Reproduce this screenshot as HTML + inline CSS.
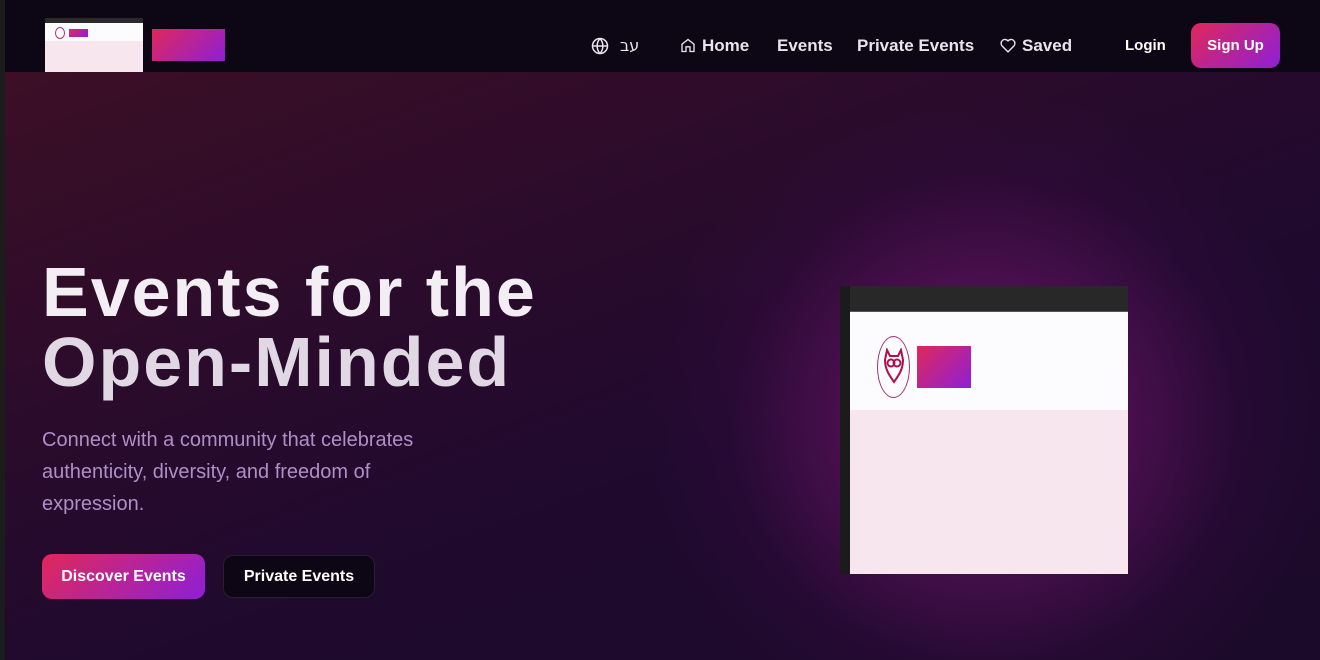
<!DOCTYPE html>
<html><head><meta charset="utf-8"><style>
*{margin:0;padding:0;box-sizing:border-box}
body{width:1320px;height:660px;overflow:hidden;font-family:"Liberation Sans",sans-serif;background:#1e0a2e;position:relative}
.hero{position:absolute;left:0;top:72px;width:1320px;height:588px;
background:radial-gradient(ellipse 340px 330px at 985px 350px,rgba(120,22,110,.95),rgba(95,18,95,.6) 45%,rgba(60,10,70,.25) 75%,rgba(0,0,0,0) 100%),linear-gradient(160deg,#3c0f25 0%,#2a0b2c 35%,#1f0a2e 60%,#1c0a2a 100%)}
.nav{position:absolute;left:0;top:0;width:1320px;height:72px;background:#0d0614}
.lb{position:absolute;left:0;top:0;width:5px;height:660px;background:#1c1c1c}
.t{position:absolute;color:#e8e4ec;font-weight:bold;font-size:17px;white-space:nowrap}
.grad{background:linear-gradient(135deg,#e0285a,#8e1fd6)}
</style></head><body>
<div class="hero"></div>
<div class="nav"></div>
<div class="lb"></div>
<div style="position:absolute;left:45px;top:18px;width:98px;height:54px;background:#f7e6ee">
 <div style="height:5px;background:#2a2a2a"></div>
 <div style="height:18px;background:#fcfcfe;position:relative">
  <div style="position:absolute;left:10px;top:4px;width:10px;height:12px;border:1px solid #b0306a;border-radius:50%"></div>
  <div class="grad" style="position:absolute;left:24px;top:6px;width:19px;height:8px"></div>
 </div>
</div>
<div class="grad" style="position:absolute;left:152px;top:29px;width:73px;height:32px"></div>
<svg style="position:absolute;left:591px;top:37px" width="18" height="18" viewBox="0 0 24 24" fill="none" stroke="#e8e4ec" stroke-width="2"><circle cx="12" cy="12" r="10"/><path d="M2 12h20M12 2a15 15 0 0 1 0 20M12 2a15 15 0 0 0 0 20"/></svg>
<div class="t" style="left:620px;top:36px;font-weight:normal;font-family:'DejaVu Sans',sans-serif;font-size:16px">עב</div>
<svg style="position:absolute;left:680px;top:37px" width="16" height="17" viewBox="0 0 24 24" fill="none" stroke="#e8e4ec" stroke-width="2"><path d="M3 10l9-7 9 7v11h-6v-7H9v7H3z"/></svg>
<div class="t" style="left:702px;top:36px">Home</div>
<div class="t" style="left:777px;top:36px">Events</div>
<div class="t" style="left:857px;top:36px">Private Events</div>
<svg style="position:absolute;left:999px;top:37px" width="18" height="17" viewBox="0 0 24 24" fill="none" stroke="#e8e4ec" stroke-width="2"><path d="M12 21l-8.5-8.5A5 5 0 0 1 12 5.5a5 5 0 0 1 8.5 7z"/></svg>
<div class="t" style="left:1022px;top:36px">Saved</div>
<div class="t" style="left:1125px;top:37px;font-size:15px;color:#fff">Login</div>
<div class="grad" style="position:absolute;left:1191px;top:23px;width:89px;height:45px;border-radius:10px;color:#fff;font-weight:bold;font-size:15px;text-align:center;line-height:45px">Sign Up</div>
<div style="position:absolute;left:42px;top:257px;font-size:70px;line-height:70px;font-weight:bold;color:#f2eef4;letter-spacing:2px;white-space:nowrap">Events for the<br><span style="color:#e0d8e2">Open-Minded</span></div>
<div style="position:absolute;left:42px;top:424px;width:430px;font-size:20px;line-height:32px;color:#b08fc6">Connect with a community that celebrates authenticity, diversity, and freedom of expression.</div>
<div class="grad" style="position:absolute;left:42px;top:554px;width:163px;height:45px;border-radius:10px;color:#fff;font-weight:bold;font-size:16px;text-align:center;line-height:45px">Discover Events</div>
<div style="position:absolute;left:223px;top:555px;width:152px;height:43px;border-radius:10px;background:#0d0614;border:1px solid #2a1e32;color:#fff;font-weight:bold;font-size:16px;text-align:center;line-height:41px">Private Events</div>
<div style="position:absolute;left:840px;top:286px;width:288px;height:288px;background:#f7e6ee">
 <div style="position:absolute;left:0;top:0;width:10px;height:288px;background:#1b1b1b"></div>
 <div style="position:absolute;left:10px;top:0;width:278px;height:26px;background:#282828;border-bottom:1px solid #555"></div>
 <div style="position:absolute;left:10px;top:26px;width:278px;height:98px;background:#fcfbfe">
  <div style="position:absolute;left:27px;top:24px;width:33px;height:62px;border:1.5px solid #a03080;border-radius:50%"></div>
  <svg style="position:absolute;left:33px;top:36px" width="22" height="36" viewBox="0 0 22 36" fill="none" stroke="#b0104a" stroke-width="2"><path d="M4 2l3 6h8l3-6 2 10c0 10-5 16-9 22C7 28 2 22 2 12z"/><circle cx="8" cy="15" r="3.5"/><circle cx="14" cy="15" r="3.5"/></svg>
  <div class="grad" style="position:absolute;left:67px;top:34px;width:54px;height:42px"></div>
 </div>
</div>
</body></html>
